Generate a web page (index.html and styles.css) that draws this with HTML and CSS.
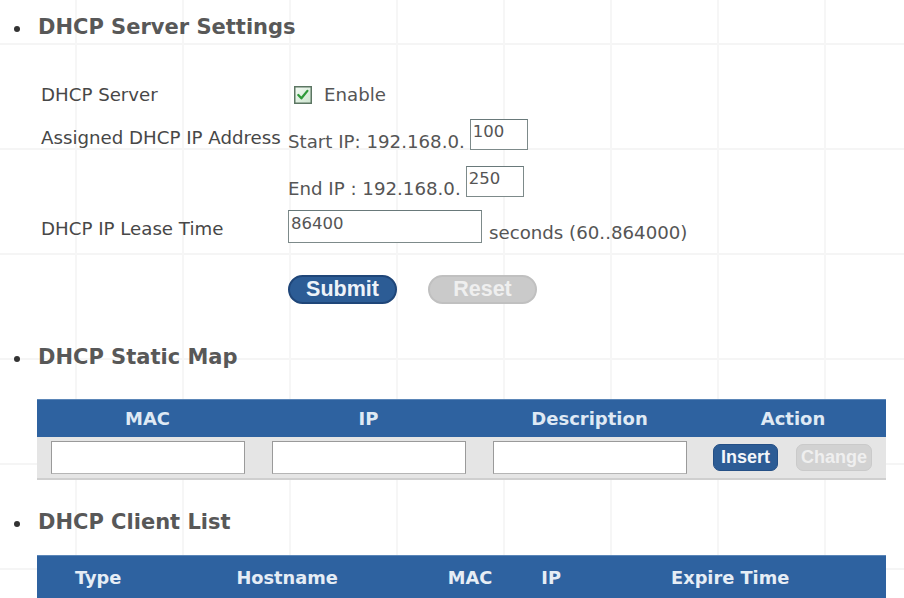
FILE: index.html
```html
<!DOCTYPE html>
<html>
<head>
<meta charset="utf-8">
<link rel="stylesheet" href="styles.css">
</head>
<body>
<div class="page">
  <h2 class="sec sec-first"><span class="dot"></span>DHCP Server Settings</h2>

  <div class="form">
    <div class="row row-server">
      <div class="lbl">DHCP Server</div>
      <div class="val">
        <span class="cb">
          <svg width="18" height="18" viewBox="0 0 18 18">
            <defs>
              <linearGradient id="cbg" x1="0" y1="0" x2="1" y2="1">
                <stop offset="0" stop-color="#f4fbf4"/>
                <stop offset="1" stop-color="#cde5cf"/>
              </linearGradient>
            </defs>
            <rect x="0.75" y="0.75" width="16.5" height="16.5" fill="url(#cbg)" stroke="#5c7663" stroke-width="1.5"/>
            <path d="M4.3 9 L7.4 12.3 L13.4 4.9" fill="none" stroke="#2f9a3a" stroke-width="2.3" stroke-linecap="round" stroke-linejoin="round"/>
          </svg>
        </span>
        <span class="txt">Enable</span>
      </div>
    </div>

    <div class="row row-start">
      <div class="lbl lbl-assigned">Assigned DHCP IP Address</div>
      <div class="val">
        <span class="txt txt-low">Start IP: 192.168.0.</span>
        <span class="inp inp-small inp-start">100</span>
      </div>
    </div>

    <div class="row row-end">
      <div class="lbl"></div>
      <div class="val">
        <span class="txt txt-low">End IP : 192.168.0.</span>
        <span class="inp inp-small inp-end">250</span>
      </div>
    </div>

    <div class="row row-lease">
      <div class="lbl">DHCP IP Lease Time</div>
      <div class="val">
        <span class="inp inp-lease">86400</span>
        <span class="txt txt-low txt-sec">seconds (60..864000)</span>
      </div>
    </div>

    <div class="row row-btns">
      <div class="lbl"></div>
      <div class="val">
        <span class="pill pill-blue">Submit</span>
        <span class="pill pill-gray">Reset</span>
      </div>
    </div>
  </div>

  <h2 class="sec sec-static"><span class="dot"></span>DHCP Static Map</h2>

  <div class="tbl tbl-static">
    <div class="thead thead-static">
      <div class="th">MAC</div>
      <div class="th">IP</div>
      <div class="th">Description</div>
      <div class="th">Action</div>
    </div>
    <div class="trow">
      <div class="td"><span class="cell-inp"></span></div>
      <div class="td"><span class="cell-inp"></span></div>
      <div class="td"><span class="cell-inp"></span></div>
      <div class="td td-act">
        <span class="sbtn sbtn-blue">Insert</span>
        <span class="sbtn sbtn-gray">Change</span>
      </div>
    </div>
  </div>

  <h2 class="sec sec-client"><span class="dot"></span>DHCP Client List</h2>

  <div class="tbl tbl-client">
    <div class="thead thead-client">
      <div class="ch ch-type">Type</div>
      <div class="ch ch-host">Hostname</div>
      <div class="ch ch-mac">MAC</div>
      <div class="ch ch-ip">IP</div>
      <div class="ch ch-exp">Expire Time</div>
    </div>
  </div>
</div>
</body>
</html>
```

FILE: styles.css
```css
html, body {
  margin: 0;
  padding: 0;
}
body {
  width: 904px;
  height: 598px;
  overflow: hidden;
  background-color: #ffffff;
  background-image:
    linear-gradient(to right, #f6f6f6 2px, transparent 2px),
    linear-gradient(to bottom, #f5f5f5 2px, transparent 2px);
  background-size: 107px 100%, 100% 105px;
  background-position: 75px 0, 0 43px;
  font-family: "DejaVu Sans", Verdana, sans-serif;
  color: #454545;
}
.page {
  padding-top: 14px;
}
.sec {
  margin: 0;
  height: 26px;
  display: flex;
  align-items: center;
  font-family: "DejaVu Sans", Verdana, sans-serif;
  font-weight: bold;
  font-size: 21px;
  color: #585858;
  padding-left: 14px;
}
.dot {
  width: 6px;
  height: 6px;
  border-radius: 50%;
  background: #333;
  margin-right: 18px;
  margin-top: 4px;
  flex: none;
}
.form {
  margin-top: 40px;
}
.row {
  display: flex;
  align-items: center;
}
.lbl {
  width: 247px;
  padding-left: 41px;
  flex: none;
  font-size: 18.2px;
  white-space: nowrap;
  color: #474747;
}
.val {
  display: flex;
  align-items: center;
}
.txt {
  font-size: 18.2px;
  color: #555;
  white-space: nowrap;
}
.txt-low {
  padding-top: 13px;
}
.row-server {
  height: 28px;
}
.cb {
  display: inline-flex;
  margin-left: 6px;
  margin-right: 12px;
  margin-top: 2px;
}
.row-start {
  height: 31px;
  margin-top: 11px;
}
.lbl-assigned {
  padding-top: 6px;
}
.row-end {
  height: 31px;
  margin-top: 16px;
}
.row-lease {
  height: 33px;
  margin-top: 13px;
}
.row-lease .lbl {
  padding-top: 3px;
}
.row-btns {
  height: 29px;
  margin-top: 32px;
}
.inp {
  box-sizing: border-box;
  display: inline-block;
  border: 1px solid #7d8a8a;
  border-top-color: #69797a;
  background: #fff;
  font-size: 16.5px;
  color: #555;
  padding: 3px 0 0 2px;
  line-height: 18px;
}
.inp-small {
  width: 58px;
  height: 31px;
  margin-left: 5px;
}
.inp-lease {
  width: 194px;
  height: 33px;
  padding-top: 4px;
}
.txt-sec {
  margin-left: 7px;
  padding-top: 12px;
}
.pill {
  box-sizing: border-box;
  display: inline-flex;
  align-items: center;
  justify-content: center;
  width: 109px;
  height: 29px;
  border-radius: 15px;
  font-family: "Liberation Sans", Arial, sans-serif;
  font-weight: bold;
  font-size: 21.5px;
}
.pill-blue {
  background: #2c5c95;
  border: 2px solid #1f4679;
  color: #eef3f9;
}
.pill-gray {
  margin-left: 31px;
  background: #cacaca;
  border: 2px solid #c0c0c0;
  color: #efefef;
}
.sec-static {
  margin-top: 40px;
}
.tbl {
  margin-left: 37px;
  width: 849px;
}
.tbl-static {
  margin-top: 29px;
}
.thead {
  background: #2e62a0;
  border-top: 1px solid #5b86b8;
}
.thead-static {
  display: grid;
  grid-template-columns: 221px 221px 221px 1fr;
  height: 37px;
  align-items: center;
}
.th {
  text-align: center;
  font-weight: bold;
  font-size: 18px;
  color: #dfe9f4;
}
.trow {
  display: grid;
  grid-template-columns: 221px 221px 221px 1fr;
  height: 41px;
  align-items: center;
  background: #e5e5e5;
  border-bottom: 2px solid #cfcfcf;
}
.td {
  display: flex;
  justify-content: center;
}
.cell-inp {
  box-sizing: border-box;
  display: block;
  width: 194px;
  height: 33px;
  background: #fff;
  border: 1px solid #9a9a9a;
  border-bottom-color: #b5b5b5;
}
.td-act {
  justify-content: flex-start;
  padding-left: 13px;
  gap: 18px;
}
.sbtn {
  box-sizing: border-box;
  display: inline-flex;
  align-items: center;
  justify-content: center;
  height: 27px;
  border-radius: 7px;
  font-family: "Liberation Sans", Arial, sans-serif;
  font-weight: bold;
  font-size: 18px;
}
.sbtn-blue {
  width: 65px;
  background: #2c5c95;
  color: #f2f6fa;
  border: 1px solid #244f85;
}
.sbtn-gray {
  width: 76px;
  background: #d2d2d2;
  color: #efefef;
  border: 1px solid #cacaca;
}
.sec-client {
  margin-top: 29px;
}
.tbl-client {
  margin-top: 20px;
}
.thead-client {
  display: flex;
  height: 42px;
  align-items: center;
}
.ch {
  font-weight: bold;
  font-size: 17.8px;
  color: #e6edf5;
  white-space: nowrap;
}
.ch-type { margin-left: 38px; }
.ch-host { margin-left: 115px; }
.ch-mac { margin-left: 110px; }
.ch-ip { margin-left: 49px; }
.ch-exp { margin-left: 110px; }
```
